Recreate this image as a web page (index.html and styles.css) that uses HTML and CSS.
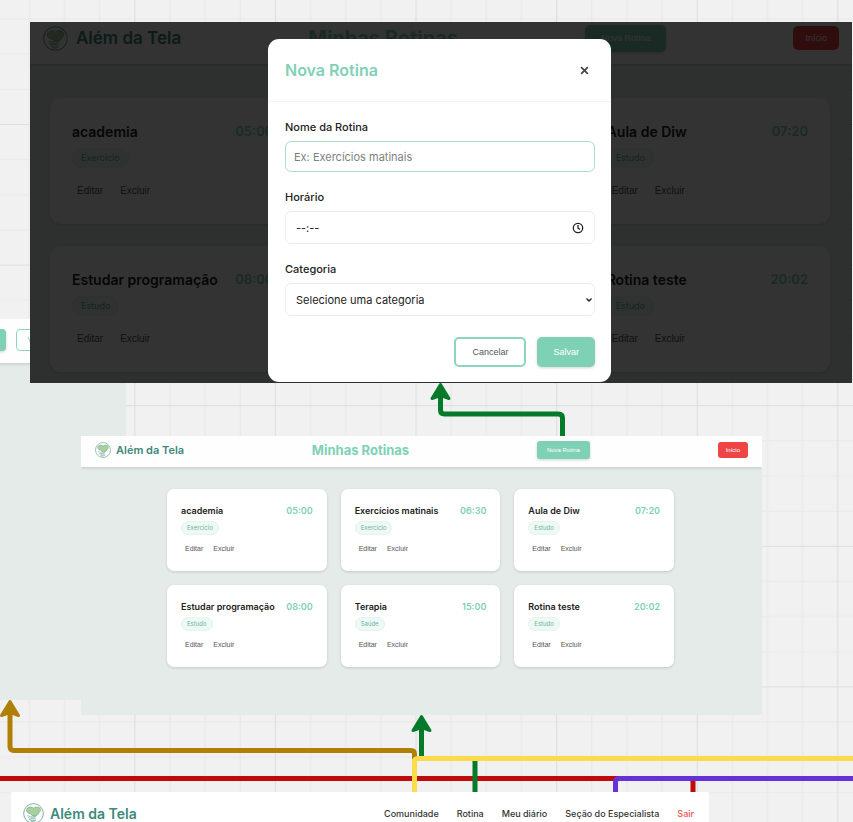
FILE: index.html
```html
<!DOCTYPE html>
<html lang="pt-BR">
<head>
<meta charset="utf-8">
<meta name="viewport" content="width=device-width, initial-scale=1">
<title>Além da Tela</title>
<link rel="stylesheet" href="styles.css">
</head>
<body>
<svg class="defs" aria-hidden="true">
  <symbol id="logo" viewBox="0 0 48 48">
    <circle cx="24" cy="24" r="22.5" fill="none" stroke="currentColor" stroke-width="2"/>
    <path d="M24 12C21 8 9 8 8 16c0 5 4 8 9 9 3 1 5 3 6 5 6 0 9-3 11-6 4-2 6-5 6-9 0-6-11-8-16-3z" fill="#a9cf9b" stroke="currentColor" stroke-width="1.4"/>
    <path d="M11 29c4 4 8 0 14 1 5 0 4 4 0 4h-7M12 33c4 4 8 4 16 3M15 38c4 3 9 3 14 1M18 42c4 1 7 1 10-1M28 31c3-2 6-4 8-7" fill="none" stroke="currentColor" stroke-width="1.6" stroke-linecap="round"/>
  </symbol>
  <symbol id="head" viewBox="-12 -2 24 22" overflow="visible">
    <path d="M0 1.5L8.5 15.5L0 12.5L-8.5 15.5Z" fill="currentColor" stroke="currentColor" stroke-width="3" stroke-linejoin="round"/>
  </symbol>
</svg>

<main class="canvas">
  <svg class="canvas-layer" aria-hidden="true">
    <defs>
      <pattern id="grid" x="134.3" y="124" width="140.6" height="140.6" patternUnits="userSpaceOnUse">
        <path d="M35.65 0V141M70.8 0V141M105.95 0V141M0 35.65H141M0 70.8H141M0 105.95H141" stroke="#e9e9e9" stroke-width="1.2"/>
        <path d="M.5 0V141M0 .5H141" stroke="#dedede" stroke-width="1.2"/>
      </pattern>
    </defs>
    <rect width="100%" height="100%" fill="url(#grid)"/>
  </svg>

  <section class="screen screen-side">
    <header class="topbar">
      <button class="btn btn-primary" type="button">Salvar</button>
      <button class="btn btn-outline" type="button">Voltar</button>
    </header>
  </section>

  <section class="screen screen-modal">
    <header class="topbar">
      <div class="brand"><svg class="logo"><use href="#logo"/></svg><span>Além da Tela</span></div>
      <h2 class="page-title">Minhas Rotinas</h2>
      <button class="btn btn-primary" type="button">Nova Rotina</button>
      <button class="btn btn-danger" type="button">Início</button>
    </header>
    <div class="cards">
      <article class="card"><div class="card-head"><h3>academia</h3><time>05:00</time></div><span class="chip">Exercício</span><div class="actions"><button type="button">Editar</button><button type="button">Excluir</button></div></article>
      <article class="card"><div class="card-head"><h3>Exercícios matinais</h3><time>06:30</time></div><span class="chip">Exercício</span><div class="actions"><button type="button">Editar</button><button type="button">Excluir</button></div></article>
      <article class="card"><div class="card-head"><h3>Aula de Diw</h3><time>07:20</time></div><span class="chip">Estudo</span><div class="actions"><button type="button">Editar</button><button type="button">Excluir</button></div></article>
      <article class="card"><div class="card-head"><h3>Estudar programação</h3><time>08:00</time></div><span class="chip">Estudo</span><div class="actions"><button type="button">Editar</button><button type="button">Excluir</button></div></article>
      <article class="card"><div class="card-head"><h3>Terapia</h3><time>15:00</time></div><span class="chip">Saúde</span><div class="actions"><button type="button">Editar</button><button type="button">Excluir</button></div></article>
      <article class="card"><div class="card-head"><h3>Rotina teste</h3><time>20:02</time></div><span class="chip">Estudo</span><div class="actions"><button type="button">Editar</button><button type="button">Excluir</button></div></article>
    </div>
    <div class="overlay">
      <form class="modal" role="dialog" aria-labelledby="modal-title">
        <div class="modal-head">
          <h2 id="modal-title">Nova Rotina</h2>
          <button class="close" type="button" aria-label="Fechar"><svg viewBox="0 0 8 8"><path d="M1 1l6 6M7 1L1 7"/></svg></button>
        </div>
        <div class="modal-body">
          <label for="nome">Nome da Rotina</label>
          <input class="field field-active" id="nome" type="text" placeholder="Ex: Exercícios matinais">
          <label for="hora">Horário</label>
          <div class="field field-time">
            <input id="hora" type="text" placeholder="--:--">
            <svg viewBox="0 0 12 12" aria-hidden="true"><circle cx="6" cy="6" r="4.7"/><path d="M6 3v3.2l2 1.2"/></svg>
          </div>
          <label for="cat">Categoria</label>
          <div class="select-wrap">
            <select class="field" id="cat"><option>Selecione uma categoria</option></select>
            <svg viewBox="0 0 8 6" aria-hidden="true"><path d="M1.5 1.5L4 4l2.5-2.5"/></svg>
          </div>
          <div class="modal-actions">
            <button class="btn btn-outline" type="button">Cancelar</button>
            <button class="btn btn-primary" type="button">Salvar</button>
          </div>
        </div>
      </form>
    </div>
  </section>

  <section class="screen screen-list">
    <header class="topbar">
      <div class="brand"><svg class="logo"><use href="#logo"/></svg><span>Além da Tela</span></div>
      <h2 class="page-title">Minhas Rotinas</h2>
      <button class="btn btn-primary" type="button">Nova Rotina</button>
      <button class="btn btn-danger" type="button">Início</button>
    </header>
    <div class="cards">
      <article class="card"><div class="card-head"><h3>academia</h3><time>05:00</time></div><span class="chip">Exercício</span><div class="actions"><button type="button">Editar</button><button type="button">Excluir</button></div></article>
      <article class="card"><div class="card-head"><h3>Exercícios matinais</h3><time>06:30</time></div><span class="chip">Exercício</span><div class="actions"><button type="button">Editar</button><button type="button">Excluir</button></div></article>
      <article class="card"><div class="card-head"><h3>Aula de Diw</h3><time>07:20</time></div><span class="chip">Estudo</span><div class="actions"><button type="button">Editar</button><button type="button">Excluir</button></div></article>
      <article class="card"><div class="card-head"><h3>Estudar programação</h3><time>08:00</time></div><span class="chip">Estudo</span><div class="actions"><button type="button">Editar</button><button type="button">Excluir</button></div></article>
      <article class="card"><div class="card-head"><h3>Terapia</h3><time>15:00</time></div><span class="chip">Saúde</span><div class="actions"><button type="button">Editar</button><button type="button">Excluir</button></div></article>
      <article class="card"><div class="card-head"><h3>Rotina teste</h3><time>20:02</time></div><span class="chip">Estudo</span><div class="actions"><button type="button">Editar</button><button type="button">Excluir</button></div></article>
    </div>
  </section>

  <svg class="canvas-layer wires" aria-hidden="true">
    <g fill="none" stroke-width="5">
      <path d="M0 778.5H690Q693 778.5 693 782V793" stroke="#c00b0b"/>
      <path d="M615.5 793V782Q615.5 778.5 619 778.5H853" stroke="#6731d8"/>
      <path d="M475 758V793M421.5 757V725" stroke="#067a2b"/>
      <path d="M562.5 436V418Q562.5 414 558.5 414H444.5Q440.5 414 440.5 410V394" stroke="#067a2b"/>
      <path d="M414.5 759V754Q414.5 750.5 411 750.5H14Q10 750.5 10 746.5V710" stroke="#b07f06"/>
      <path d="M414.5 793V762Q414.5 758.5 418 758.5H853" stroke="#ffdb4a"/>
    </g>
    <use href="#head" x="428.5" y="381" width="24" height="22" color="#067a2b"/>
    <use href="#head" x="409.5" y="713" width="24" height="22" color="#067a2b"/>
    <use href="#head" x="-2" y="698" width="24" height="22" color="#b07f06"/>
  </svg>

  <section class="screen screen-home">
    <header class="topbar">
      <div class="brand"><svg class="logo"><use href="#logo"/></svg><span>Além da Tela</span></div>
      <nav>
        <a href="#">Comunidade</a>
        <a href="#">Rotina</a>
        <a href="#">Meu diário</a>
        <a href="#">Seção do Especialista</a>
        <a class="exit" href="#">Sair</a>
      </nav>
    </header>
  </section>
</main>
</body>
</html>
```
FILE: styles.css
```css
* { box-sizing: border-box; }
body { margin: 0; background: #f1f1f1; color: #222; font-family: Inter, "Liberation Sans", sans-serif; }
h2, h3 { margin: 0; }
button { margin: 0; font-family: "Liberation Sans", Arial, sans-serif; cursor: pointer; }
.defs { position: absolute; width: 0; height: 0; }

.canvas { position: relative; height: 100vh; min-height: 822px; overflow: hidden; }
.canvas-layer { position: absolute; inset: 0; width: 100%; height: 100%; pointer-events: none; }

/* Screens pinned on the canvas */
.screen { position: absolute; overflow: hidden; background: #e5ebe9; }
.screen-side { left: -400px; top: 319px; width: 526px; height: 381px; }
.screen-modal { left: 30px; top: 22px; width: 822px; height: 361px; }
.screen-list { left: 81px; top: 436px; width: 681px; height: 279px; }
.screen-home { left: 11px; top: 792px; width: 698px; height: 42px; }

.topbar { display: flex; align-items: center; justify-content: space-between; background: #fefefe; box-shadow: 0 1px 3px rgba(0, 0, 0, .16); }
.brand { display: flex; align-items: center; color: #40897b; font-weight: 600; white-space: nowrap; }
.logo { display: block; color: #6ba697; }
.page-title { color: #7fd1b6; font-weight: 700; }

.btn { border: 0; color: #fff; white-space: nowrap; }
.btn-primary { background: #7fd1b6; box-shadow: 0 1px 3px rgba(0, 0, 0, .18); }
.btn-danger { background: #ef4444; }
.btn-outline { background: #fff; color: #555; border: 2px solid #8dd6be; }

.cards { display: grid; grid-template-columns: repeat(3, 1fr); }
.card { background: #fff; box-shadow: 0 1px 3px rgba(0, 0, 0, .14); }
.card-head { display: flex; align-items: center; justify-content: space-between; }
.card h3 { font-weight: 600; white-space: nowrap; }
.card time { color: #7fd1b6; font-weight: 600; }
.chip { display: block; width: fit-content; background: #eef8f5; color: #6bb5a0; border: 1px solid #e5f4ef; border-radius: 99px; }
.actions { display: flex; }
.actions button { padding: 0; border: 0; background: none; color: #555; }

/* Side screen */
.screen-side .topbar { height: 44px; padding: 0 64px 2px 0; justify-content: flex-end; gap: 10px; }
.screen-side .btn { height: 22px; padding: 0 16px; border-radius: 4px; font-size: 9px; }
.screen-side .btn-outline { width: 46px; padding: 0 9px; border-width: 1px; color: #7fd1b6; }

/* Large screen with dialog */
.screen-modal .topbar { height: 42px; padding: 0 13px 10px; }
.screen-modal .brand { gap: 8px; font-size: 17px; }
.screen-modal .logo { width: 25px; height: 25px; }
.screen-modal .page-title { font-size: 20px; }
.screen-modal .btn { height: 27px; padding: 0 16px; border-radius: 5px; font-size: 9px; }
.screen-modal .btn-danger { height: 24px; padding: 0 12px; }
.screen-modal .cards { padding: 34px 22px 0 20px; gap: 22px; }
.screen-modal .card { height: 126px; padding: 22px; border-radius: 11px; }
.screen-modal .card-head { height: 22px; }
.screen-modal .card h3 { font-size: 14px; }
.screen-modal .card time { font-size: 13px; }
.screen-modal .chip { margin-top: 6px; padding: 0 8px; font-size: 9px; line-height: 18px; }
.screen-modal .actions { gap: 17px; margin-top: 17px; padding-left: 5px; }
.screen-modal .actions button { font-size: 10px; line-height: 12px; }

.overlay { position: absolute; inset: 0; display: flex; align-items: flex-start; justify-content: center; padding: 17px 3px 0 0; background: rgba(0, 0, 0, .8); }
.modal { width: 343px; padding-bottom: 15px; background: #fff; border-radius: 11px; }
.modal-head { display: flex; align-items: center; justify-content: space-between; height: 63px; padding: 0 22px 0 17px; border-bottom: 1px solid #f3f3f3; }
.modal-head h2 { color: #7fd1b6; font-size: 16px; font-weight: 600; }
.close { display: flex; padding: 0; border: 0; background: none; }
.close svg { width: 9px; height: 9px; fill: none; stroke: #444; stroke-width: 1.5; }
.modal-body { padding: 17px 16px 0 17px; }
.modal-body label { display: block; height: 22px; font-size: 11px; font-weight: 500; line-height: 17px; }
.field { display: block; width: 100%; height: 33px; margin: 0 0 17px; padding: 0 8px; border: 1px solid #ececec; border-radius: 6px; background: #fff; color: #222; font-family: inherit; font-size: 11px; outline: 0; }
.field-active { height: 31px; border-color: #a9dfcd; }
.field-active::placeholder { color: #808080; }
.field-time { display: flex; align-items: center; padding: 0 10px; }
.field-time input { flex: 1; min-width: 0; padding: 0; border: 0; outline: 0; font: inherit; }
.field-time input::placeholder { color: #222; }
.field-time svg { width: 12px; height: 12px; fill: none; stroke: #222; stroke-width: 1.3; }
.select-wrap { position: relative; }
.select-wrap .field { appearance: none; padding: 0 10px; }
.select-wrap svg { position: absolute; right: 2px; top: 14px; width: 8px; height: 6px; fill: none; stroke: #222; stroke-width: 1.4; }
.modal-actions { display: flex; justify-content: flex-end; gap: 11px; margin-top: 21px; }
.screen-modal .modal-actions .btn { height: 30px; }

/* Small list screen */
.screen-list .topbar { height: 31px; padding: 0 14px 3px; }
.screen-list .brand { gap: 5px; font-size: 11px; }
.screen-list .logo { width: 16px; height: 16px; }
.screen-list .page-title { font-size: 13px; }
.screen-list .btn { height: 18px; padding: 0 10px; border-radius: 3px; font-size: 6px; }
.screen-list .btn-danger { height: 16px; padding: 0 8px; }
.screen-list .cards { padding: 22px 88px 0 86px; gap: 14px; }
.screen-list .card { height: 82px; padding: 14px; border-radius: 7px; }
.screen-list .card-head { height: 15px; }
.screen-list .card h3, .screen-list .card time { font-size: 9px; }
.screen-list .chip { margin-top: 3px; padding: 0 5px; font-size: 6px; line-height: 12px; }
.screen-list .actions { gap: 10px; margin-top: 10px; padding-left: 4px; }
.screen-list .actions button { font-size: 7px; line-height: 8px; }

/* Home screen */
.screen-home .topbar { height: 42px; padding: 0 15px 0 12px; background: #fff; }
.screen-home .brand { gap: 6px; font-size: 14px; }
.screen-home .logo { width: 21px; height: 21px; }
.screen-home nav { display: flex; gap: 18px; }
.screen-home a { color: #333; font-size: 9px; font-weight: 500; text-decoration: none; }
.screen-home a.exit { color: #f05252; }
```
